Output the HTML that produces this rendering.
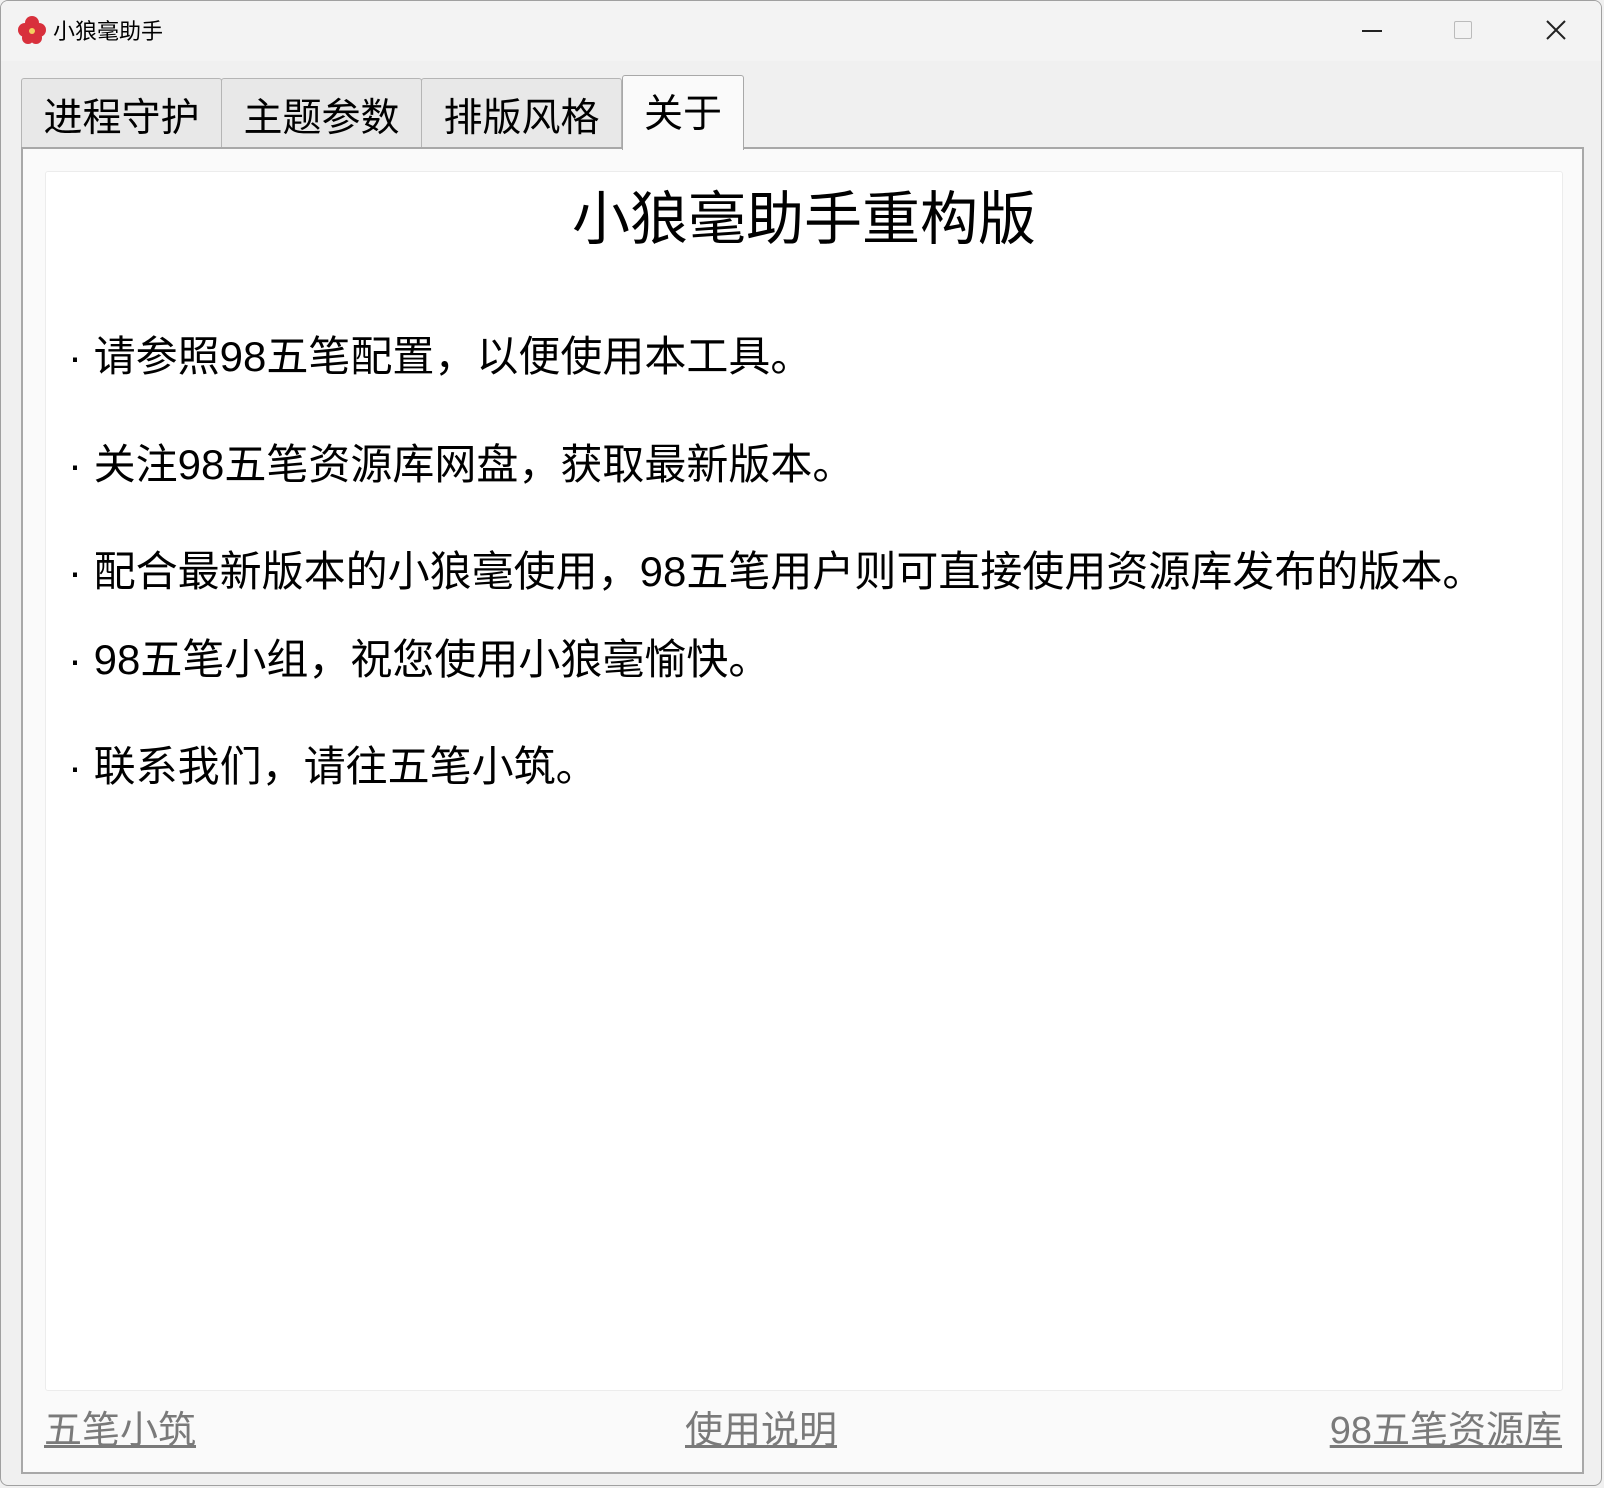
<!DOCTYPE html>
<html><head><meta charset="utf-8"><style>
*{margin:0;padding:0;box-sizing:border-box}
body{width:1604px;height:1488px;background:#f0f0f0;position:relative;overflow:hidden;font-family:"Liberation Sans","Noto Sans CJK SC",sans-serif;color:#000}
.win{position:absolute;left:0;top:0;width:1602px;height:1486px;border:1px solid #a0a0a0;border-radius:8px;background:#f0f0f0;overflow:hidden}
.tb{position:absolute;left:0;top:0;width:100%;height:60px;background:#f3f3f3}
.ttl{position:absolute;left:52px;top:13px;font-size:22px}
.tab{position:absolute;top:77px;height:70px;background:#e8e8e8;border:1px solid #b5b5b5;border-bottom:none;border-radius:3px 3px 0 0;font-size:39px;line-height:80px;text-align:center}
.pane{position:absolute;left:20px;top:146px;width:1563px;height:1327px;background:#fafafa;border:2px solid #a8a8a8}
.inner{position:absolute;left:22px;top:22px;width:1518px;height:1220px;background:#fff;border:1px solid #ececec;border-radius:3px}
.h{position:absolute;left:0;width:100%;text-align:center;top:13px;font-size:58px;line-height:70px}
.li{position:absolute;left:22px;font-size:42px;line-height:50px;white-space:nowrap}
.lk{position:absolute;top:1257px;font-size:38px;color:#7a7a7a;text-decoration:underline;line-height:50px}
</style></head><body>
<div class="win">
<div class="tb">
<svg style="position:absolute;left:16px;top:12px" width="30" height="32" viewBox="0 0 30 32"><g fill="#d8303c"><circle cx="15" cy="10" r="7"/><circle cx="8" cy="17" r="7"/><circle cx="22" cy="17" r="7"/><circle cx="11" cy="25" r="6"/><circle cx="19" cy="25" r="6"/></g><circle cx="15" cy="18" r="3" fill="#f3d060"/></svg>
<div class="ttl">小狼毫助手</div>
<div style="position:absolute;left:1361px;top:29px;width:20px;height:2px;background:#222"></div>
<div style="position:absolute;left:1453px;top:20px;width:18px;height:18px;border:1.5px solid #bbb;border-radius:2px"></div>
<svg style="position:absolute;left:1545px;top:19px" width="20" height="20"><path d="M1 1L19 19M19 1L1 19" stroke="#222" stroke-width="2"/></svg>
</div>
<div class="tab" style="left:20px;width:201px">进程守护</div>
<div class="tab" style="left:220px;width:201px">主题参数</div>
<div class="tab" style="left:420px;width:201px">排版风格</div>
<div class="pane">
<div class="inner">
<div class="h">小狼毫助手重构版</div>
<div class="li" style="top:160px">· 请参照98五笔配置，以便使用本工具。</div>
<div class="li" style="top:268px">· 关注98五笔资源库网盘，获取最新版本。</div>
<div class="li" style="top:375px">· 配合最新版本的小狼毫使用，98五笔用户则可直接使用资源库发布的版本。</div>
<div class="li" style="top:463px">· 98五笔小组，祝您使用小狼毫愉快。</div>
<div class="li" style="top:570px">· 联系我们，请往五笔小筑。</div>
</div>
<div class="lk" style="left:21px">五笔小筑</div>
<div class="lk" style="left:662px">使用说明</div>
<div class="lk" style="right:20px">98五笔资源库</div>
</div>
<div class="tab" style="left:621px;top:74px;width:122px;height:75px;background:#fafafa;border-color:#a8a8a8;line-height:78px">关于</div>
</div>
</body></html>
